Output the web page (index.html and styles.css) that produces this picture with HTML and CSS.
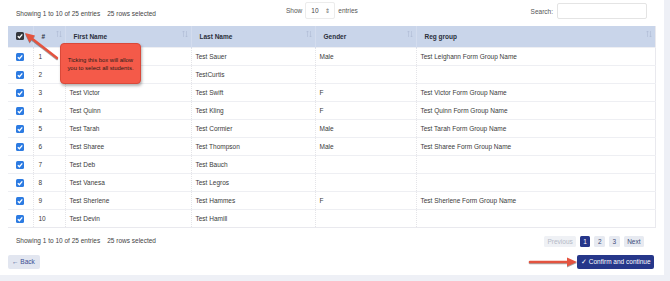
FILE: index.html
```html
<!DOCTYPE html>
<html>
<head>
<meta charset="utf-8">
<link rel="stylesheet" href="styles.css">
</head>
<body>
<div class="panel">
  <div class="topbar">
    <div class="info">Showing 1 to 10 of 25 entries<span class="selected">25 rows selected</span></div>
    <div class="length">Show <span class="select">10<span class="updown">&#8661;</span></span> entries</div>
    <div class="search">Search: <span class="input"></span></div>
  </div>

  <table class="grid">
    <colgroup>
      <col class="c-chk"><col class="c-num"><col class="c-first"><col class="c-last"><col class="c-gender"><col class="c-reg">
    </colgroup>
    <thead>
      <tr>
        <th class="chk-cell"><span class="box box-head"><svg viewBox="0 0 8 8"><path d="M1.8 4.2 L3.4 5.7 L6.3 2.4" fill="none" stroke="#fff" stroke-width="1.3"/></svg></span></th>
        <th><div class="th"><span>#</span><svg class="sort" viewBox="0 0 6 8"><path d="M1.5 7 V1 M0.4 2.2 L1.5 1 L2.6 2.2 M4.5 1 V7 M3.4 5.8 L4.5 7 L5.6 5.8" fill="none" stroke="#aebbd3" stroke-width="0.6"/></svg></div></th>
        <th><div class="th"><span>First Name</span><svg class="sort" viewBox="0 0 6 8"><path d="M1.5 7 V1 M0.4 2.2 L1.5 1 L2.6 2.2 M4.5 1 V7 M3.4 5.8 L4.5 7 L5.6 5.8" fill="none" stroke="#aebbd3" stroke-width="0.6"/></svg></div></th>
        <th><div class="th"><span>Last Name</span><svg class="sort" viewBox="0 0 6 8"><path d="M1.5 7 V1 M0.4 2.2 L1.5 1 L2.6 2.2 M4.5 1 V7 M3.4 5.8 L4.5 7 L5.6 5.8" fill="none" stroke="#aebbd3" stroke-width="0.6"/></svg></div></th>
        <th><div class="th"><span>Gender</span><svg class="sort" viewBox="0 0 6 8"><path d="M1.5 7 V1 M0.4 2.2 L1.5 1 L2.6 2.2 M4.5 1 V7 M3.4 5.8 L4.5 7 L5.6 5.8" fill="none" stroke="#aebbd3" stroke-width="0.6"/></svg></div></th>
        <th><div class="th"><span>Reg group</span><svg class="sort" viewBox="0 0 6 8"><path d="M1.5 7 V1 M0.4 2.2 L1.5 1 L2.6 2.2 M4.5 1 V7 M3.4 5.8 L4.5 7 L5.6 5.8" fill="none" stroke="#aebbd3" stroke-width="0.6"/></svg></div></th>
      </tr>
    </thead>
    <tbody>
      <tr><td class="chk-cell"><span class="box"><svg viewBox="0 0 8 8"><path d="M1.8 4.2 L3.4 5.7 L6.3 2.4" fill="none" stroke="#fff" stroke-width="1.3"/></svg></span></td><td>1</td><td></td><td>Test Sauer</td><td>Male</td><td>Test Leighann Form Group Name</td></tr>
      <tr><td class="chk-cell"><span class="box"><svg viewBox="0 0 8 8"><path d="M1.8 4.2 L3.4 5.7 L6.3 2.4" fill="none" stroke="#fff" stroke-width="1.3"/></svg></span></td><td>2</td><td></td><td>TestCurtis</td><td></td><td></td></tr>
      <tr><td class="chk-cell"><span class="box"><svg viewBox="0 0 8 8"><path d="M1.8 4.2 L3.4 5.7 L6.3 2.4" fill="none" stroke="#fff" stroke-width="1.3"/></svg></span></td><td>3</td><td>Test Victor</td><td>Test Swift</td><td>F</td><td>Test Victor Form Group Name</td></tr>
      <tr><td class="chk-cell"><span class="box"><svg viewBox="0 0 8 8"><path d="M1.8 4.2 L3.4 5.7 L6.3 2.4" fill="none" stroke="#fff" stroke-width="1.3"/></svg></span></td><td>4</td><td>Test Quinn</td><td>Test Kling</td><td>F</td><td>Test Quinn Form Group Name</td></tr>
      <tr><td class="chk-cell"><span class="box"><svg viewBox="0 0 8 8"><path d="M1.8 4.2 L3.4 5.7 L6.3 2.4" fill="none" stroke="#fff" stroke-width="1.3"/></svg></span></td><td>5</td><td>Test Tarah</td><td>Test Cormier</td><td>Male</td><td>Test Tarah Form Group Name</td></tr>
      <tr><td class="chk-cell"><span class="box"><svg viewBox="0 0 8 8"><path d="M1.8 4.2 L3.4 5.7 L6.3 2.4" fill="none" stroke="#fff" stroke-width="1.3"/></svg></span></td><td>6</td><td>Test Sharee</td><td>Test Thompson</td><td>Male</td><td>Test Sharee Form Group Name</td></tr>
      <tr><td class="chk-cell"><span class="box"><svg viewBox="0 0 8 8"><path d="M1.8 4.2 L3.4 5.7 L6.3 2.4" fill="none" stroke="#fff" stroke-width="1.3"/></svg></span></td><td>7</td><td>Test Deb</td><td>Test Bauch</td><td></td><td></td></tr>
      <tr><td class="chk-cell"><span class="box"><svg viewBox="0 0 8 8"><path d="M1.8 4.2 L3.4 5.7 L6.3 2.4" fill="none" stroke="#fff" stroke-width="1.3"/></svg></span></td><td>8</td><td>Test Vanesa</td><td>Test Legros</td><td></td><td></td></tr>
      <tr><td class="chk-cell"><span class="box"><svg viewBox="0 0 8 8"><path d="M1.8 4.2 L3.4 5.7 L6.3 2.4" fill="none" stroke="#fff" stroke-width="1.3"/></svg></span></td><td>9</td><td>Test Sherlene</td><td>Test Hammes</td><td>F</td><td>Test Sherlene Form Group Name</td></tr>
      <tr><td class="chk-cell"><span class="box"><svg viewBox="0 0 8 8"><path d="M1.8 4.2 L3.4 5.7 L6.3 2.4" fill="none" stroke="#fff" stroke-width="1.3"/></svg></span></td><td>10</td><td>Test Devin</td><td>Test Hamill</td><td></td><td></td></tr>
    </tbody>
  </table>

  <div class="footer">
    <div class="info">Showing 1 to 10 of 25 entries<span class="selected">25 rows selected</span></div>
    <div class="pager">
      <span class="pbtn disabled">Previous</span>
      <span class="pbtn active">1</span>
      <span class="pbtn">2</span>
      <span class="pbtn">3</span>
      <span class="pbtn">Next</span>
    </div>
  </div>

  <div class="actions">
    <span class="btn-back">&#8592; Back</span>
    <span class="btn-confirm">&#10003; Confirm and continue</span>
  </div>

  <div class="tip">Ticking this box will allow<br>you to select all students.</div>
  <svg class="arrow arrow-a" viewBox="0 0 45 36">
    <line x1="37" y1="30" x2="12.5" y2="11" stroke="#e4533f" stroke-width="2.4" stroke-linecap="round"/>
    <polygon points="5,5 15,7.5 9.5,14.5" fill="#e4533f"/>
  </svg>
  <svg class="arrow arrow-b" viewBox="0 0 50 14">
    <line x1="2" y1="7" x2="41" y2="7" stroke="#e4533f" stroke-width="2.6" stroke-linecap="round"/>
    <polygon points="49,7 39,2.5 39,11.5" fill="#e4533f"/>
  </svg>
</div>
</body>
</html>
```

FILE: styles.css
```css
html, body {
  margin: 0;
  padding: 0;
}

body {
  width: 670px;
  height: 281px;
  background: #eef0f6;
  font-family: "Liberation Sans", Arial, sans-serif;
  font-size: 6.5px;
  color: #333;
  overflow: hidden;
}

.panel {
  position: relative;
  width: 664px;
  height: 275px;
  background: #fff;
}

/* top toolbar */
.topbar {
  display: flex;
  align-items: flex-start;
  height: 26px;
}

.info {
  line-height: 8px;
  margin-left: 16px;
  color: #444;
}

.topbar .info {
  width: 270px;
  padding-top: 10px;
}

.selected {
  margin-left: 7px;
}

.length {
  display: flex;
  align-items: center;
  gap: 3px;
  height: 17px;
  margin-top: 2px;
  color: #555;
}

.select {
  display: inline-flex;
  align-items: center;
  justify-content: space-between;
  box-sizing: border-box;
  width: 30px;
  height: 17px;
  padding: 0 4px 0 5px;
  border: 1px solid #ececec;
  border-radius: 2px;
  color: #444;
}

.updown {
  font-size: 6px;
  color: #666;
}

.search {
  display: flex;
  align-items: center;
  gap: 4px;
  margin-left: auto;
  margin-right: 17px;
  margin-top: 3px;
  height: 16px;
  color: #555;
}

.input {
  display: block;
  box-sizing: border-box;
  width: 90px;
  height: 16px;
  border: 1px solid #e4e4e4;
  border-radius: 2px;
}

/* table */
.grid {
  margin-left: 8px;
  width: 647px;
  table-layout: fixed;
  border-collapse: collapse;
  border-right: 1px solid #e9e9ee;
  border-bottom: 1px solid #e9e9ee;
}

.c-chk { width: 25px; }
.c-num { width: 32px; }
.c-first { width: 126px; }
.c-last { width: 124px; }
.c-gender { width: 101px; }
.c-reg { width: 239px; }

.grid th {
  height: 21px;
  padding: 0 3px 0 8px;
  background: #c9d5ea;
  text-align: left;
  font-weight: bold;
  color: #2a2f3a;
  border-left: 1px solid #d3dcee;
}

.grid th:first-child {
  border-left: none;
}

.th {
  display: flex;
  align-items: center;
  justify-content: space-between;
}

.sort {
  width: 6px;
  height: 8px;
  margin-top: -5px;
}

.grid td {
  height: 17px;
  padding: 0 4px 0 4px;
  border-top: 1px solid #eeeff3;
  border-left: 1px dotted #e4e4e8;
  color: #3a3a3a;
  white-space: nowrap;
  overflow: hidden;
}

.grid td:first-child {
  border-left: none;
}

.grid td:nth-child(2) {
  padding-left: 5px;
}

.grid .chk-cell {
  padding: 0;
  text-align: center;
}

.box {
  display: inline-block;
  width: 8px;
  height: 8px;
  border-radius: 1.5px;
  background: #2c7be2;
  vertical-align: middle;
}

.box svg {
  display: block;
  width: 8px;
  height: 8px;
}

.box-head {
  background: #34373c;
  margin-top: -2px;
}

/* footer */
.footer {
  display: flex;
  align-items: center;
  justify-content: space-between;
  height: 14px;
  margin-top: 6px;
}

.pager {
  display: flex;
  gap: 4px;
  margin-right: 20px;
}

.pbtn {
  display: block;
  height: 11px;
  line-height: 11px;
  padding: 0 3.5px;
  border-radius: 1.5px;
  background: #e7eaf1;
  color: #3d4a78;
}

.pbtn.disabled {
  background: #eff1f5;
  color: #b4b9c6;
  padding: 0 3px;
}

.pbtn.active {
  background: #26368a;
  color: #fff;
}

.actions {
  display: flex;
  justify-content: space-between;
  margin-top: 7px;
  height: 14px;
}

.btn-back {
  display: block;
  margin-left: 8px;
  width: 32px;
  height: 14px;
  line-height: 14px;
  box-sizing: border-box;
  padding-left: 4px;
  border-radius: 2px;
  background: #e2e6f0;
  color: #3b4e93;
}

.btn-confirm {
  display: block;
  margin-right: 10px;
  width: 77px;
  height: 14px;
  line-height: 14px;
  box-sizing: border-box;
  padding-left: 4px;
  border-radius: 2px;
  background: #26378a;
  color: #fff;
  white-space: nowrap;
}

/* callout overlay */
.tip {
  position: absolute;
  left: 60px;
  top: 43px;
  width: 81px;
  height: 41px;
  box-sizing: border-box;
  display: flex;
  align-items: center;
  justify-content: center;
  text-align: center;
  font-size: 5.9px;
  line-height: 8px;
  color: #2a1a18;
  background: #f45a49;
  border: 1px solid #d9493a;
  border-radius: 4px;
  box-shadow: 1px 2px 3px rgba(0, 0, 0, 0.3);
}

.arrow {
  position: absolute;
  filter: drop-shadow(0.5px 1px 0.6px rgba(0, 0, 0, 0.35));
}

.arrow-a {
  left: 20px;
  top: 28px;
  width: 45px;
  height: 36px;
}

.arrow-b {
  left: 528px;
  top: 255px;
  width: 50px;
  height: 14px;
}
```
